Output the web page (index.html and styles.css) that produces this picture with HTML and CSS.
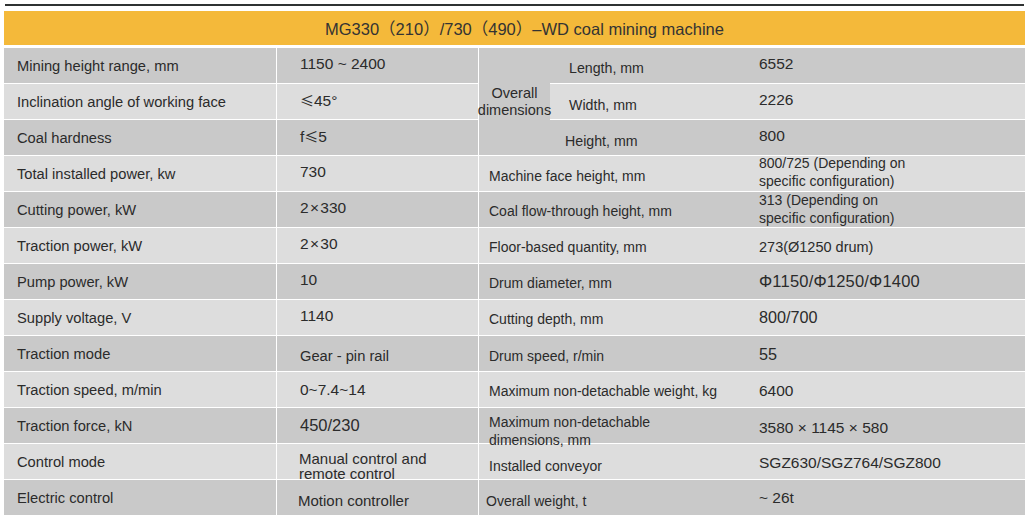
FILE: index.html
```html
<!DOCTYPE html>
<html lang="en">
<head>
<meta charset="utf-8">
<title>MG330(210)/730(490)-WD coal mining machine</title>
<link rel="stylesheet" href="styles.css">
</head>
<body>
<div class="sheet">
  <div class="rule"></div>
  <div class="title">MG330（210）/730（490）–WD coal mining machine</div>
  <table class="specs">
    <colgroup>
      <col class="c1"><col class="c2"><col class="c3"><col class="c4"><col class="c5">
    </colgroup>
    <tbody>
      <tr class="d">
        <td class="lab">Mining height range, mm</td>
        <td class="val up">1150 ~ 2400</td>
        <td class="ov" rowspan="3"><div class="ovin"><span>Overall</span><span>dimensions</span></div></td>
        <td class="sub s3">Length, mm</td>
        <td class="rv up">6552</td>
      </tr>
      <tr class="l">
        <td class="lab">Inclination angle of working face</td>
        <td class="val up"><span class="le">≤</span>45°</td>
        <td class="sub s4">Width, mm</td>
        <td class="rv up">2226</td>
      </tr>
      <tr class="d">
        <td class="lab">Coal hardness</td>
        <td class="val up">f<span class="le">≤</span>5</td>
        <td class="sub s4 hs">Height, mm</td>
        <td class="rv up">800</td>
      </tr>
      <tr class="l">
        <td class="lab">Total installed power, kw</td>
        <td class="val up">730</td>
        <td class="rl s3" colspan="2">Machine face height, mm</td>
        <td class="rv two top"><div class="tw m2">800/725 (Depending on<br>specific configuration)</div></td>
      </tr>
      <tr class="d">
        <td class="lab">Cutting power, kW</td>
        <td class="val up nar">2 × 330</td>
        <td class="rl s1" colspan="2">Coal flow-through height, mm</td>
        <td class="rv two top"><div class="tw m1">313 (Depending on<br>specific configuration)</div></td>
      </tr>
      <tr class="l">
        <td class="lab">Traction power, kW</td>
        <td class="val up nar">2 × 30</td>
        <td class="rl s2" colspan="2">Floor-based quantity, mm</td>
        <td class="rv txt s1">273(Ø1250 drum)</td>
      </tr>
      <tr class="d">
        <td class="lab">Pump power, kW</td>
        <td class="val up">10</td>
        <td class="rl s2" colspan="2">Drum diameter, mm</td>
        <td class="rv phi">Φ1150/Φ1250/Φ1400</td>
      </tr>
      <tr class="l">
        <td class="lab">Supply voltage, V</td>
        <td class="val up">1140</td>
        <td class="rl s2" colspan="2">Cutting depth, mm</td>
        <td class="rv lg">800/700</td>
      </tr>
      <tr class="d">
        <td class="lab">Traction mode</td>
        <td class="val txt s3">Gear - pin rail</td>
        <td class="rl s3" colspan="2">Drum speed, r/min</td>
        <td class="rv lg s1">55</td>
      </tr>
      <tr class="l">
        <td class="lab">Traction speed, m/min</td>
        <td class="val">0~7.4~14</td>
        <td class="rl s2" colspan="2">Maximum non-detachable weight, kg</td>
        <td class="rv s1">6400</td>
      </tr>
      <tr class="d">
        <td class="lab">Traction force, kN</td>
        <td class="val big">450/230</td>
        <td class="rl top" colspan="2"><div class="tw md">Maximum non-detachable<br>dimensions, mm</div></td>
        <td class="rv s3">3580 × 1145 × 580</td>
      </tr>
      <tr class="l">
        <td class="lab">Control mode</td>
        <td class="val txt2 top"><div class="tm">Manual control and<br>remote control</div></td>
        <td class="rl s5" colspan="2">Installed conveyor</td>
        <td class="rv s2">SGZ630/SGZ764/SGZ800</td>
      </tr>
      <tr class="d">
        <td class="lab">Electric control</td>
        <td class="val txt3 s3">Motion controller</td>
        <td class="rl s4 ow" colspan="2">Overall weight, t</td>
        <td class="rv">~ 26t</td>
      </tr>
    </tbody>
  </table>
</div>
</body>
</html>
```

FILE: styles.css
```css
* {
  box-sizing: border-box;
}

body {
  margin: 0;
  background: #ffffff;
  font-family: "Liberation Sans", Arial, "Noto Sans CJK SC", sans-serif;
  color: #2b2b2b;
}

.sheet {
  width: 1031px;
  padding: 4px 6px 0 4px;
}

.rule {
  width: 1019px;
  height: 2px;
  margin-left: 1px;
  background: #2f3232;
}

.title {
  width: 1021px;
  height: 34px;
  margin-top: 5px;
  padding-left: 20px;
  background: #f4b93a;
  display: flex;
  align-items: center;
  justify-content: center;
  font-family: "Liberation Sans", "Noto Sans CJK SC", sans-serif;
  font-size: 16.5px;
  color: #333333;
}

.specs {
  width: 1021px;
  margin-top: 3px;
  table-layout: fixed;
  border-collapse: separate;
  border-spacing: 0;
}

.c1 { width: 273px; }
.c2 { width: 202px; }
.c3 { width: 71px; }
.c4 { width: 198px; }
.c5 { width: 277px; }

.specs tr {
  height: 36px;
}

.specs td {
  padding: 0;
  border-bottom: 1px solid #ffffff;
  vertical-align: middle;
  white-space: nowrap;
}

tr.d td {
  background: #c9c9c9;
}

tr.l td {
  background: #dddddd;
}

.lab {
  padding-left: 13px !important;
  border-right: 1px solid #ffffff;
  font-size: 14.7px;
}

.val {
  padding-left: 23px !important;
  border-right: 1px solid #ffffff;
  font-size: 15.5px;
}

.val.nar {
  word-spacing: -3px;
}

.val.big {
  font-size: 16.5px;
}

.val.txt {
  font-size: 14.7px;
}

.val.txt2 {
  font-size: 15px;
  padding-left: 22px !important;
}

.val.txt3 {
  font-size: 15px;
  padding-left: 21px !important;
}

.le {
  font-family: "Noto Sans CJK SC", sans-serif;
  font-size: 14px;
}

.ov {
  font-size: 14.5px;
  position: relative;
  z-index: 1;
}

.ovin {
  display: flex;
  flex-direction: column;
  align-items: center;
  line-height: 17px;
}

.sub {
  padding-left: 19px !important;
  font-size: 14.2px;
}

.sub.hs {
  padding-left: 15px !important;
}

.rl {
  padding-left: 10px !important;
  font-size: 14px;
}

.rl.ow {
  padding-left: 7px !important;
}

.rv {
  padding-left: 11px !important;
  font-size: 15.5px;
}

.rv.lg {
  font-size: 16.2px;
}

.rv.phi {
  font-size: 16.5px;
  letter-spacing: 0.2px;
}

.rv.txt {
  font-size: 14.5px;
}

.rv.two {
  font-size: 14px;
}

.specs td.top {
  vertical-align: top;
}

.tw {
  line-height: 18px;
  height: 32px;
}

.tw.m2 {
  margin-top: -2px;
}

.tw.m1 {
  margin-top: -1px;
}

.tw.md {
  margin-top: 5px;
  height: 26px;
  white-space: nowrap;
}

.tm {
  margin-top: 7px;
  line-height: 15px;
  height: 28px;
}

.up {
  padding-bottom: 3px !important;
}

.s1 { padding-top: 2px !important; }
.s2 { padding-top: 3px !important; }
.s3 { padding-top: 5px !important; }
.s4 { padding-top: 7px !important; }
.s5 { padding-top: 9px !important; }
```
